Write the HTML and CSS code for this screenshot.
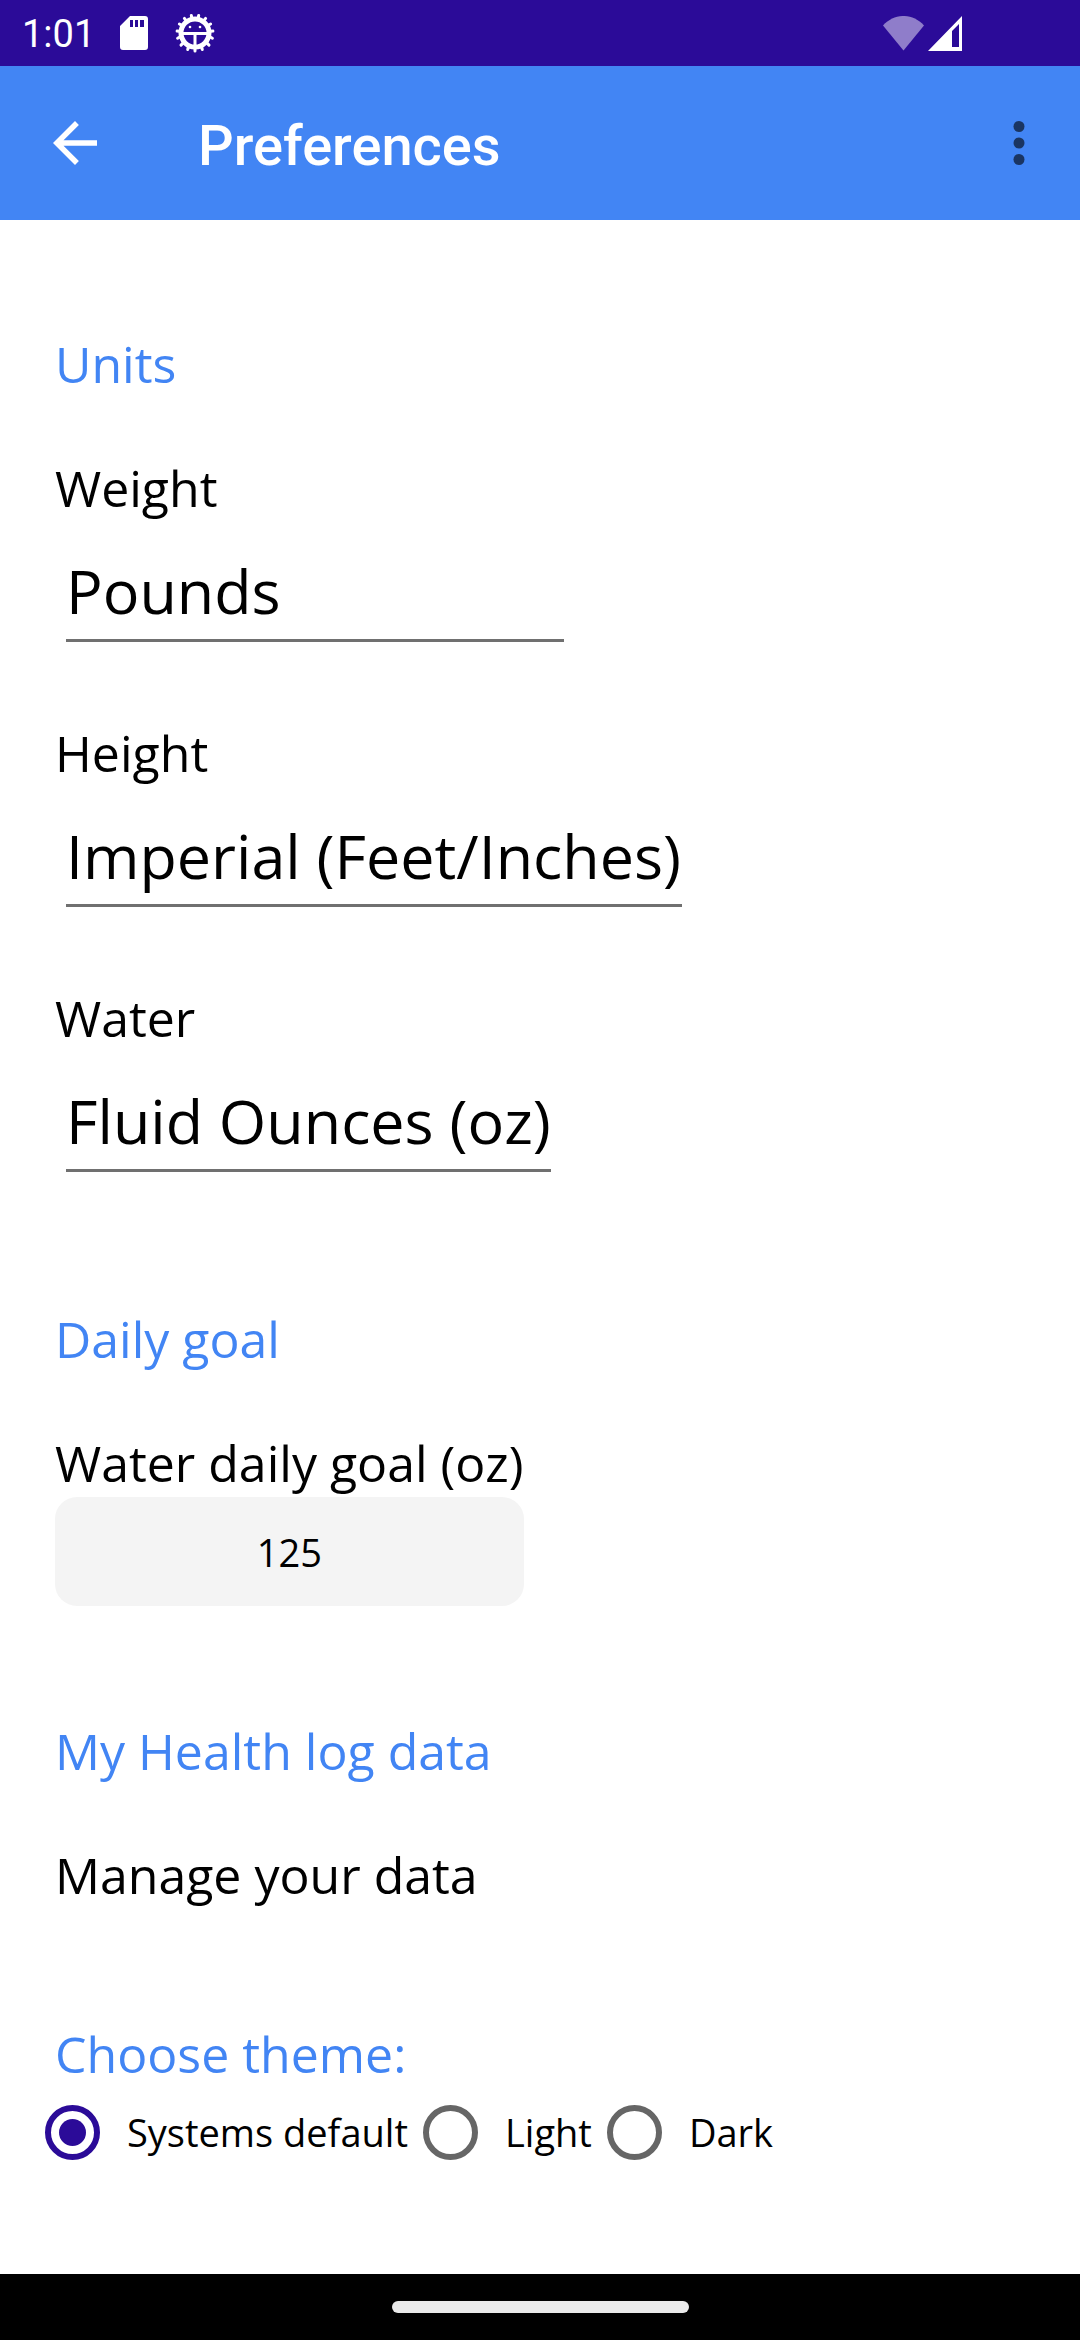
FILE: index.html
```html
<!DOCTYPE html>
<html lang="en">
<head>
    <meta charset="UTF-8">
    <meta name="viewport" content="width=device-width, initial-scale=1.0">
    <title>Preferences</title>
    <link rel="stylesheet" href="styles.css">
</head>
<body>

    <!-- Status bar -->
    <div class="status-bar">
        <span class="clock">1:01</span>
        <svg class="sd-icon" width="28" height="34" viewBox="0 0 28 34" aria-hidden="true">
            <path fill="#fff" fill-rule="evenodd" d="M10 0H25Q28 0 28 3V31Q28 34 25 34H3Q0 34 0 31V10ZM10 4V11H13V4ZM15 4V11H18V4ZM20 4V11H24V4Z"/>
        </svg>
        <svg class="gear-icon" width="40" height="40" viewBox="0 0 40 40" fill="none" stroke="#fff" aria-hidden="true">
            <path stroke-width="3" stroke-linecap="round" d="M20 34V38M26.100 32.800L27.300 36.500M31.300 29.400L34 32.100M33.900 23.200L37.400 25.200M34 18.500L37.900 18.100M32.100 13L35.600 11M28.200 8.700L30.600 5.400M22.900 6.300L23.700 2.400M17.100 6.300L16.300 2.400M11.800 8.700L9.400 5.400M7.900 13L4.400 11M6 18.500L2.100 18.100M6.100 23.200L2.600 25.200M8.700 29.400L6 32.100M13.900 32.800L12.700 36.500"/>
            <circle cx="20" cy="20" r="14" stroke-width="5"/>
            <path d="M7 20.500H33M20 21V33" stroke-width="3"/>
            <circle cx="15" cy="14" r="1.300" fill="#fff" stroke="none"/>
            <circle cx="25" cy="14" r="1.300" fill="#fff" stroke="none"/>
        </svg>
        <div class="signals">
            <svg width="41" height="35" viewBox="0 0 41 35" aria-hidden="true">
                <path fill="#8f7dca" d="M0 9.500C11.500 -3.200 29.500 -3.200 41 9.500L20.500 34.500Z"/>
            </svg>
            <svg width="34" height="35" viewBox="0 0 34 35" aria-hidden="true">
                <path fill="#fff" fill-rule="evenodd" d="M0 35L34 0V35ZM24 15V31H31V8Z"/>
            </svg>
        </div>
    </div>

    <!-- App bar -->
    <header class="app-bar">
        <button class="icon-btn" type="button" aria-label="Back">
            <svg width="66" height="66" viewBox="0 0 24 24" aria-hidden="true">
                <path fill="#fff" d="M20 11H7.830l5.590-5.590L12 4l-8 8 8 8 1.410-1.410L7.830 13H20v-2z"/>
            </svg>
        </button>
        <h1>Preferences</h1>
        <button class="icon-btn" type="button" aria-label="More options">
            <svg width="66" height="66" viewBox="0 0 24 24" fill="#1a3562" aria-hidden="true">
                <circle cx="12" cy="6" r="2"/>
                <circle cx="12" cy="12" r="2"/>
                <circle cx="12" cy="18" r="2"/>
            </svg>
        </button>
    </header>

    <!-- Main Content -->
    <main class="container">
        <section class="units">
            <h2>Units</h2>
            <div class="form-group">
                <label for="weight">Weight</label>
                <select id="weight" class="wide">
                    <option>Pounds</option>
                </select>
            </div>
            <div class="form-group">
                <label for="height">Height</label>
                <select id="height">
                    <option>Imperial (Feet/Inches)</option>
                </select>
            </div>
            <div class="form-group">
                <label for="water">Water</label>
                <select id="water">
                    <option>Fluid Ounces (oz)</option>
                </select>
            </div>
        </section>

        <section>
            <h2>Daily goal</h2>
            <div class="goal">
                <label for="goal">Water daily goal (oz)</label>
                <input type="text" inputmode="numeric" size="3" id="goal" value="125">
            </div>
        </section>

        <section>
            <h2>My Health log data</h2>
            <a href="#" class="manage-link">Manage your data</a>
        </section>

        <fieldset>
            <legend>Choose theme:</legend>
            <div class="themes">
                <input type="radio" name="theme" id="system" checked>
                <label for="system">Systems default</label>
                <input type="radio" name="theme" id="light">
                <label for="light">Light</label>
                <input type="radio" name="theme" id="dark">
                <label for="dark">Dark</label>
            </div>
        </fieldset>
    </main>

    <!-- Gesture bar -->
    <footer class="nav-bar">
        <div class="nav-handle"></div>
    </footer>

</body>
</html>
```
FILE: styles.css
```css
* {
    box-sizing: border-box;
}

body {
    margin: 0;
    min-height: 100vh;
    display: flex;
    flex-direction: column;
    background: #fff;
    color: #000;
    font-family: "Open Sans", sans-serif;
    font-size: 50px;
    line-height: 68px;
}

svg {
    display: block;
}

/* Status bar */
.status-bar {
    display: flex;
    align-items: center;
    height: 66px;
    padding: 0 118px 0 22px;
    background: #2b0b98;
    color: #fff;
}

.clock {
    padding-top: 2px;
    font-family: Roboto, sans-serif;
    font-size: 38px;
}

.sd-icon {
    margin-left: 25px;
}

.gear-icon {
    margin-left: 27px;
}

.signals {
    display: flex;
    gap: 4px;
    margin-left: auto;
}

/* App bar */
.app-bar {
    display: flex;
    align-items: center;
    height: 154px;
    padding: 0 28px 0 42px;
    background: #4285f4;
}

.app-bar h1 {
    flex: 1;
    margin: 0;
    padding: 6px 0 0 90px;
    color: #fff;
    font-family: Roboto, sans-serif;
    font-size: 56px;
    font-weight: 500;
}

.icon-btn {
    padding: 0;
    border: none;
    background: none;
    cursor: pointer;
}

/* Preferences */
.container {
    flex: 1;
    display: flex;
    flex-direction: column;
    gap: 111px;
    padding: 110px 55px;
}

.units {
    padding-bottom: 22px;
}

h2,
legend {
    margin: 0;
    padding: 0;
    color: #4285f4;
    font-size: 50px;
    font-weight: 400;
}

h2 {
    margin-bottom: 56px;
}

label {
    display: block;
}

.form-group + .form-group {
    margin-top: 77px;
}

select {
    appearance: none;
    display: block;
    height: 93px;
    margin: 27px 0 0 11px;
    padding: 0 0 7px;
    border: none;
    border-bottom: 3px solid #707070;
    border-radius: 0;
    background: none;
    color: #000;
    font-family: inherit;
    font-size: 61px;
}

.wide {
    width: 498px;
}

.goal {
    width: fit-content;
}

.goal input {
    display: block;
    width: 100%;
    height: 109px;
    border: none;
    border-radius: 22px;
    background: #f4f4f4;
    color: #000;
    font-family: inherit;
    font-size: 38px;
    text-align: center;
}

.manage-link {
    display: block;
    color: #000;
    text-decoration: none;
}

/* Theme radios */
fieldset {
    margin: 0;
    padding: 0;
    border: none;
}

.themes {
    display: flex;
    align-items: center;
    margin: 17px 0 0 -10px;
    font-size: 38px;
    line-height: 55px;
}

.themes label {
    margin: 0 15px 0 27px;
}

.themes input {
    appearance: none;
    display: grid;
    place-content: center;
    width: 55px;
    height: 55px;
    margin: 0;
    border: 6px solid #666;
    border-radius: 50%;
}

.themes input:checked {
    border-color: #2b0b98;
}

.themes input:checked::before {
    content: "";
    width: 27px;
    height: 27px;
    border-radius: 50%;
    background: #2b0b98;
}

/* Gesture bar */
.nav-bar {
    display: flex;
    align-items: center;
    justify-content: center;
    height: 66px;
    background: #000;
}

.nav-handle {
    width: 297px;
    height: 12px;
    border-radius: 6px;
    background: #eaeaea;
}
```
